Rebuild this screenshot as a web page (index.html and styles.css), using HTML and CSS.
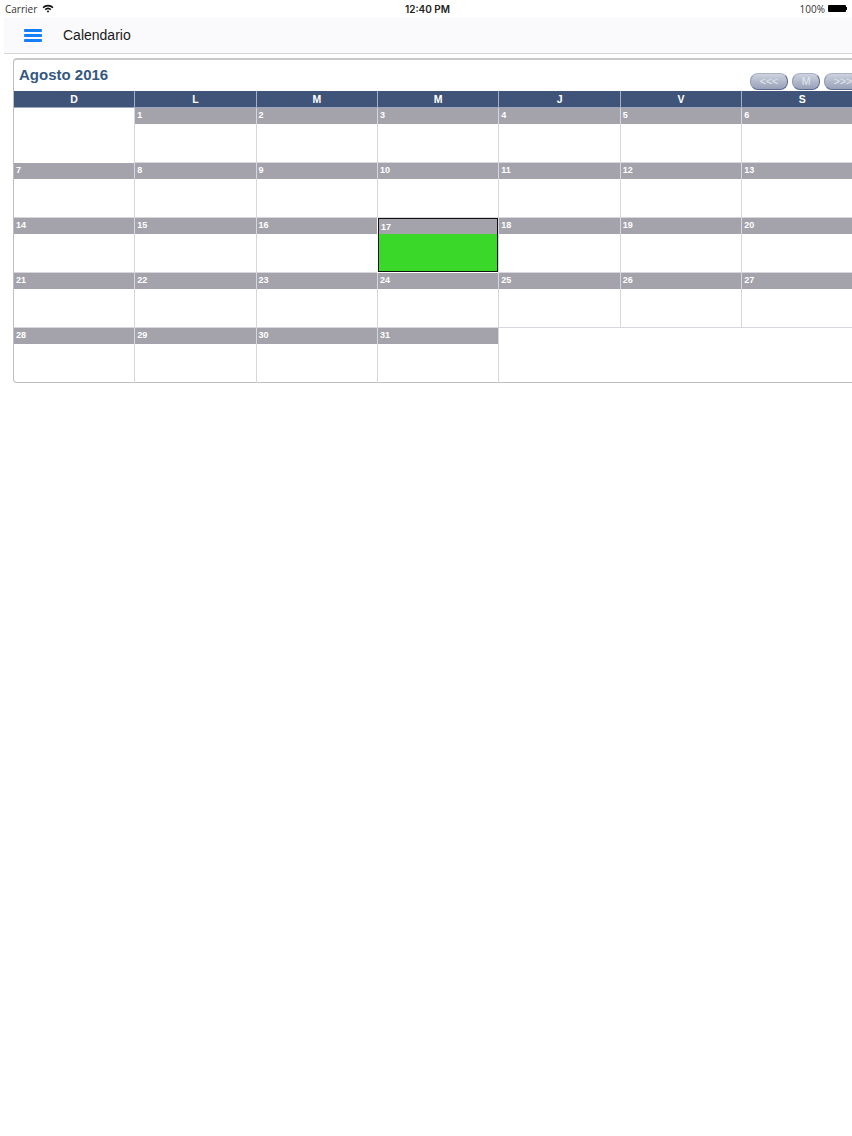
FILE: index.html
```html
<!DOCTYPE html>
<html lang="en">
<head>
    <meta charset="UTF-8">
    <meta name="viewport" content="width=device-width, initial-scale=1.0">
    <title>Calendario</title>
    <link rel="stylesheet" href="styles.css">
</head>
<body>
    <div class="status-bar">
        <div class="status-left">
            <span>Carrier</span>
            <svg class="wifi" width="12" height="9" viewBox="0 0 12 9">
                <path d="M0.5 3 A8 8 0 0 1 11.5 3 L10.4 4.2 A6.4 6.4 0 0 0 1.6 4.2 Z" fill="#111"/>
                <path d="M2.6 5.1 A5 5 0 0 1 9.4 5.1 L8.3 6.3 A3.4 3.4 0 0 0 3.7 6.3 Z" fill="#111"/>
                <path d="M4.6 7.1 A2.2 2.2 0 0 1 7.4 7.1 L6 8.7 Z" fill="#111"/>
            </svg>
        </div>
        <div class="status-time">12:40 PM</div>
        <div class="status-right">
            <span>100%</span>
            <div class="battery"></div>
            <div class="battery-tip"></div>
        </div>
    </div>

    <div class="nav-bar">
        <svg class="menu-icon" width="18" height="13" viewBox="0 0 18 13">
            <rect x="0" y="0" width="18" height="3" rx="1" fill="#147efb"/>
            <rect x="0" y="5" width="18" height="3" rx="1" fill="#147efb"/>
            <rect x="0" y="10" width="18" height="3" rx="1" fill="#147efb"/>
        </svg>
        <span class="nav-title">Calendario</span>
    </div>

    <div class="calendar">
        <div class="cal-top">
            <h1>Agosto 2016</h1>
            <div class="cal-buttons">
                <div class="cal-btn wide">&lt;&lt;&lt;</div>
                <div class="cal-btn">M</div>
                <div class="cal-btn wide">&gt;&gt;&gt;</div>
            </div>
        </div>
        <div class="cal-head">
            <div>D</div><div>L</div><div>M</div><div>M</div><div>J</div><div>V</div><div>S</div>
        </div>
        <div class="cal-grid" id="grid"></div>
    </div>

    <script>
        // August 2016 starts on a Monday and has 31 days
        const grid = document.getElementById("grid");
        let html = `<div class="day empty"></div>`;
        for (let d = 1; d <= 31; d++) {
            const today = d === 17 ? " today" : "";
            html += `<div class="day${today}"><div class="num">${d}</div><div class="slot"></div></div>`;
        }
        html += `<div class="day rest"></div>`;
        grid.innerHTML = html;
    </script>
</body>
</html>
```

FILE: styles.css
```css
html, body {
    margin: 0;
    padding: 0;
    background: #fff;
    overflow: hidden;
}

body {
    width: 852px;
    height: 1136px;
    font-family: "Liberation Sans", Arial, sans-serif;
    color: #111;
}

.status-bar {
    display: grid;
    grid-template-columns: 1fr auto 1fr;
    align-items: center;
    height: 17px;
    background: #fff;
    font-family: "Open Sans", "Liberation Sans", sans-serif;
    font-size: 10px;
}

.status-left {
    display: flex;
    align-items: center;
    gap: 5px;
    padding-left: 5px;
    color: #333;
}

.status-time {
    padding-left: 3px;
    font-size: 10px;
    font-weight: 600;
    font-family: "Inter", "Liberation Sans", sans-serif;
    color: #222;
}

.status-right {
    display: flex;
    align-items: center;
    justify-self: end;
    color: #333;
}

.battery {
    width: 18px;
    height: 7px;
    margin-left: 3px;
    background: #000;
    border-radius: 1px;
}

.battery-tip {
    width: 1px;
    height: 3px;
    margin-right: 5px;
    background: #000;
}

.nav-bar {
    display: flex;
    align-items: center;
    height: 36px;
    margin-left: 4px;
    padding-left: 20px;
    background: #faf9fb;
    border-bottom: 1px solid #d6d6da;
}

.menu-icon {
    margin-right: 21px;
}

.nav-title {
    font-family: "Liberation Sans", Arial, sans-serif;
    font-size: 14px;
    color: #1a1a1a;
}

.calendar {
    margin: 4px 0 0 13px;
    width: 860px;
    height: 322px;
    background: #fff;
    border: 1px solid #bdbdc2;
    border-top: 2px solid #c8c8cc;
    border-right: none;
    border-radius: 4px 0 0 4px;
}

.cal-top {
    display: flex;
    justify-content: space-between;
    height: 31px;
}

h1 {
    margin: 6px 0 0 5px;
    font-size: 15px;
    line-height: 18px;
    font-weight: bold;
    color: #34587f;
}

.cal-buttons {
    display: flex;
    gap: 4px;
    margin: 13px 12px 0 0;
}

.cal-btn {
    width: 26px;
    height: 15px;
    line-height: 15px;
    text-align: center;
    font-size: 10.5px;
    color: #e3e6ee;
    background: linear-gradient(#cdd2de, #97a0b8);
    border: 1px solid #5a6a8c;
    border-top-color: #a9b2c6;
    border-left-color: #8e9ab4;
    border-radius: 8px;
}

.cal-btn.wide {
    width: 36px;
}

.cal-head {
    display: grid;
    grid-template-columns: 120.2px repeat(6, 121.4px);
    height: 17px;
}

.cal-head div {
    background: #3f5478;
    border-left: 1px solid #a5b0c6;
    border-bottom: 1px solid #9aa6bd;
    color: #fff;
    font-size: 10.5px;
    font-weight: bold;
    line-height: 16px;
    text-align: center;
    box-sizing: border-box;
}

.cal-head div:first-child {
    border-left: none;
}

.cal-grid {
    display: grid;
    grid-template-columns: 120.2px repeat(6, 121.4px);
    grid-auto-rows: 55px;
}

.day {
    border-left: 1px solid #d6d6dc;
    border-bottom: 1px solid #d6d6dc;
    box-sizing: border-box;
}

.day:nth-child(7n + 1) {
    border-left: none;
}

.day.empty {
    border-bottom: none;
}

.day:nth-last-child(-n + 5) {
    border-bottom: none;
}

.day.rest {
    grid-column: span 3;
}

.num {
    height: 16px;
    background: #a4a3ac;
    color: #fff;
    font-size: 9px;
    font-weight: bold;
    line-height: 15px;
    padding-left: 2px;
}

.day.today {
    border: 1px solid #111;
    margin: 0 0 1px 1px;
}

.day.today .num {
    height: 15px;
    line-height: 17px;
}

.day.today .slot {
    height: 37px;
    background: #3ad829;
}
```
